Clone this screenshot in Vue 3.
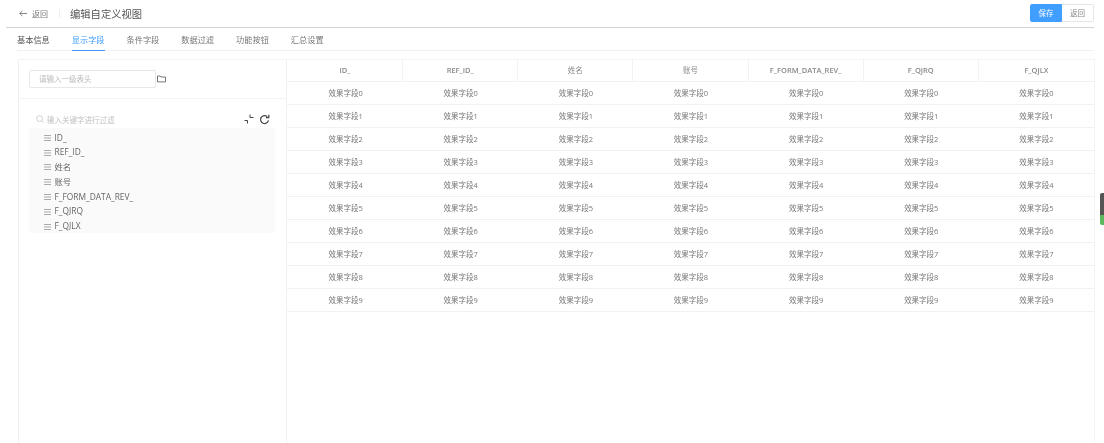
<script setup>
const tabs = ['基本信息', '显示字段', '条件字段', '数据过滤', '功能按钮', '汇总设置']
const cols = ['ID_', 'REF_ID_', '姓名', '账号', 'F_FORM_DATA_REV_', 'F_QJRQ', 'F_QJLX']
const rows = Array.from({ length: 10 }, (_, i) => '效果字段' + i)
const isCjk = (c) => /[^\x00-\x7f]/.test(c)
</script>

<template>
  <div class="page">
    <header class="head">
      <div class="back">
        <svg class="arrow" width="8" height="7" viewBox="0 0 8 7" fill="none" stroke="#666" stroke-width=".8"><path d="M8 3.5H.8M3.4 .8.8 3.5l2.6 2.7" /></svg>
        <span>返回</span>
      </div>
      <i class="vline"></i>
      <h1>编辑自定义视图</h1>
      <div class="btns">
        <button class="save">保存</button>
        <button class="ret">返回</button>
      </div>
    </header>

    <nav class="tabs">
      <span v-for="(t, i) in tabs" :key="t" class="tab" :class="{ on: i === 1, first: i === 0 }">{{ t }}</span>
    </nav>

    <main class="body">
      <aside class="side">
        <div class="folder-row">
          <div class="input">请输入一级表头</div>
          <svg width="9" height="8" viewBox="0 0 9 8" fill="none" stroke="#555" stroke-width=".8"><path d="M.5 6.900V1h2.700l.8 1h4.500v4.900z" /></svg>
        </div>
        <div class="filter-row">
          <svg width="8" height="8" viewBox="0 0 8 8" fill="none" stroke="#bbb" stroke-width=".7"><circle cx="3.600" cy="3.600" r="2.900" /><path d="M5.800 5.800 7.500 7.500" /></svg>
          <span class="filter-text">输入关键字进行过滤</span>
          <svg class="collapse" width="10" height="10" viewBox="0 0 10 10" fill="none" stroke="#444" stroke-width="1"><path d="M.5 6.500h3v3M6 .5v3h3.500" /></svg>
          <svg width="11" height="11" viewBox="0 0 11 11" fill="none" stroke="#444" stroke-width="1.200"><path d="M9.500 6.400A4 4 0 1 1 8.300 2.600" /><path d="M9.800 .8v2.800H7" /></svg>
        </div>
        <ul class="tree">
          <li v-for="c in cols" :key="c">
            <svg width="7" height="6" viewBox="0 0 7 6" stroke="#888" stroke-width=".7"><path d="M0 .5h7M0 3h7M0 5.500h7" /></svg>
            <span>{{ c }}</span>
          </li>
        </ul>
      </aside>

      <section class="table">
        <div class="tr th">
          <div v-for="c in cols" :key="c" class="cell" :class="{ cjk: isCjk(c) }">{{ c }}</div>
        </div>
        <div v-for="r in rows" :key="r" class="tr">
          <div v-for="c in cols" :key="c" class="cell">{{ r }}</div>
        </div>
      </section>
    </main>

    <i class="edge"></i>
  </div>
</template>

<style>
html, body { margin: 0; background: #fff; overflow: hidden; }
</style>

<style scoped>
.page {
  position: relative;
  width: 1104px;
  height: 443px;
  overflow: hidden;
  background: #fff;
  font-family: "Open Sans", "Noto Sans CJK SC", sans-serif;
  color: #666;
  filter: blur(.4px);
}
.head {
  height: 26px;
  margin: 0 10px 0 6px;
  padding: 0 0 1px 13px;
  display: flex;
  align-items: center;
  border-bottom: 1px solid #d4d4d4;
}
.back { display: flex; align-items: center; gap: 5px; font-size: 8px; color: #777; }
.vline { width: 1px; height: 9px; background: #eee; margin: 0 10px 0 11px; }
h1 { margin: 0; font-size: 10.3px; font-weight: 400; color: #555; }
.btns { margin-left: auto; margin-top: -1px; display: flex; height: 18px; }
button {
  width: 32px;
  padding: 0;
  font: inherit;
  font-size: 7.5px;
  border: 1px solid #e6e6e6;
  background: #fff;
  color: #888;
}
.save { background: #409eff; border-color: #409eff; color: #fff; border-radius: 2px 0 0 2px; }
.ret { border-left: 0; border-radius: 0 2px 2px 0; }
.tabs {
  margin: 0 10px 0 17px;
  height: 22px;
  display: flex;
  gap: 22px;
  border-bottom: 1px solid #eff0f6;
}
.tab { height: 22px; line-height: 23px; font-size: 8.2px; color: #777; box-sizing: border-box; }
.tab.first { color: #555; }
.tab.on { height: 23px; color: #409eff; border-bottom: 1px solid #409eff; }
.body {
  display: flex;
  margin: 8px 9px 0 18px;
  border-top: 1px solid #f3f3f8;
  height: 400px;
}
.side {
  width: 267px;
  flex: none;
  border-left: 1px solid #efeff6;
  border-right: 1px solid #efeff6;
}
.folder-row {
  height: 38px;
  display: flex;
  align-items: center;
  gap: 1px;
  padding-left: 10px;
  border-bottom: 1px solid #f3f3f6;
}
.input {
  width: 116px;
  height: 16px;
  line-height: 16px;
  padding-left: 9px;
  border: 1px solid #e8e8ec;
  border-radius: 2px;
  font-size: 7.5px;
  color: #bbb;
}
.filter-row {
  height: 18px;
  padding: 11px 16px 0 17px;
  display: flex;
  align-items: center;
  font-size: 7.5px;
  color: #c0c0c0;
}
.filter-text { margin-left: 3px; }
.collapse { margin-left: auto; margin-right: 5px; }
.tree {
  list-style: none;
  margin: 0 11px 0 10px;
  padding: 2.5px 0 0 15px;
  height: 102.5px;
  background: #fafafa;
}
.tree li {
  height: 14.8px;
  line-height: 14.8px;
  display: flex;
  align-items: center;
  gap: 3.5px;
  font-size: 8.4px;
  color: #666;
}
.table { flex: 1; min-width: 0; border-right: 1px solid #f3f3f8; }
.tr {
  display: grid;
  grid-template-columns: repeat(7, 1fr);
  height: 23px;
  padding-left: 1px;
  box-sizing: border-box;
  border-bottom: 1px solid #f1f1f6;
}
.tr.th { height: 22px; }
.cell {
  line-height: 22px;
  text-align: center;
  font-size: 7.5px;
  color: #777;
}
.th .cell { line-height: 21px; border-right: 1px solid #f1f1f6; font-weight: 600; color: #888; }
.th .cell.cjk { font-weight: 400; color: #888; }
.th .cell:last-child { border-right: 0; }
.edge {
  position: absolute;
  left: 1100px;
  top: 193px;
  width: 4px;
  height: 32px;
  border-radius: 2px 0 0 2px;
  background: linear-gradient(#555 0 68%, #5cb85c 68%);
}
</style>
